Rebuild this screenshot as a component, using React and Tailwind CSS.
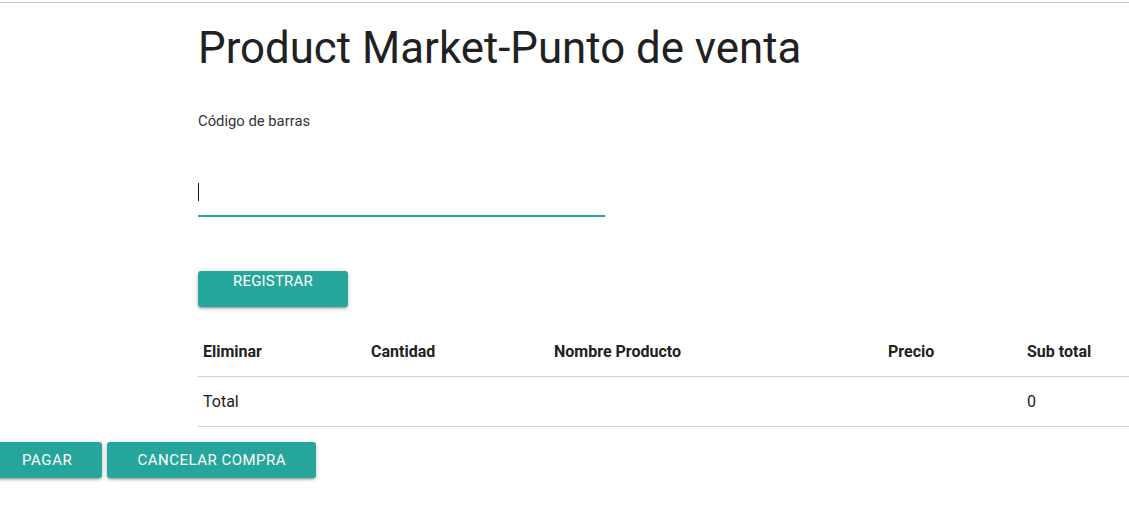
export default function App() {
  const btnShadow =
    "shadow-[0_2px_2px_0_rgba(0,0,0,0.14),0_3px_1px_-2px_rgba(0,0,0,0.12),0_1px_5px_0_rgba(0,0,0,0.2)]";
  return (
    <div className="w-[1129px] h-[515px] overflow-hidden bg-white font-['Roboto',sans-serif] text-[#212121]">
      <div className="mt-[2px] h-px bg-[#c2c2c2]" />
      <div className="pl-[198px]">
        <h1 className="mt-[21px] h-[48px] text-[43.8px] leading-[48px] font-normal text-[#212121]">
          Product Market-Punto de venta
        </h1>
        <label className="block mt-[39px] h-[20px] text-[14.8px] leading-[20px] text-[#333]">
          Código de barras
        </label>
        <div className="mt-[52px] w-[407px]">
          <div className="h-[32px] flex items-start">
            <div className="w-px h-[18px] bg-[#111]" />
          </div>
          <div className="h-[2px] bg-[#26a69a]" />
        </div>
        <button
          className={`mt-[54px] w-[150px] h-[36px] rounded-[3px] bg-[#26a69a] text-white text-[15px] leading-[20px] tracking-[0.2px] uppercase flex justify-center items-start ${btnShadow}`}
        >
          REGISTRAR
        </button>
        <table className="mt-[19px] w-[931px] table-fixed border-collapse text-[16px] text-[#212121]">
          <colgroup>
            <col className="w-[168px]" />
            <col className="w-[183px]" />
            <col className="w-[334px]" />
            <col className="w-[139px]" />
            <col className="w-[107px]" />
          </colgroup>
          <thead>
            <tr className="border-b border-[#d0d0d0] h-[50px]">
              <th className="text-left font-bold px-[5px] pt-[3px]">Eliminar</th>
              <th className="text-left font-bold px-[5px] pt-[3px]">Cantidad</th>
              <th className="text-left font-bold px-[5px] pt-[3px]">Nombre Producto</th>
              <th className="text-left font-bold px-[5px] pt-[3px]">Precio</th>
              <th className="text-left font-bold px-[5px] pt-[3px] whitespace-nowrap">Sub total</th>
            </tr>
          </thead>
          <tbody>
            <tr className="border-b border-[#d0d0d0] h-[50px]">
              <td className="px-[5px] pt-[2px]">Total</td>
              <td className="px-[5px]"></td>
              <td className="px-[5px]"></td>
              <td className="px-[5px]"></td>
              <td className="px-[5px] pt-[2px]">0</td>
            </tr>
          </tbody>
        </table>
      </div>
      <div className="mt-[15px] -ml-[8px] flex gap-[5px]">
        <button
          className={`h-[36px] px-[30px] pt-[2px] rounded-[3px] bg-[#26a69a] text-white text-[15px] tracking-[0.6px] uppercase ${btnShadow}`}
        >
          PAGAR
        </button>
        <button
          className={`h-[36px] px-[30px] pt-[2px] rounded-[3px] bg-[#26a69a] text-white text-[15px] tracking-[0.5px] uppercase ${btnShadow}`}
        >
          CANCELAR COMPRA
        </button>
      </div>
    </div>
  );
}
